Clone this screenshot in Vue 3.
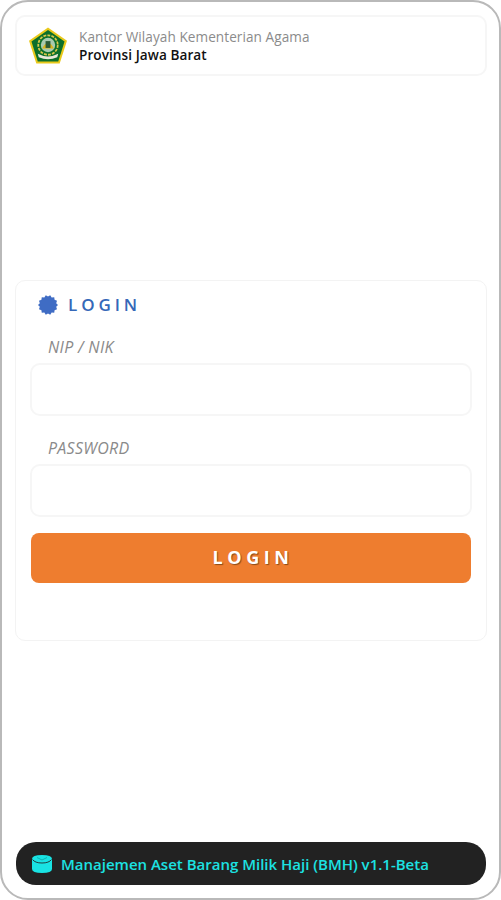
<template>
  <div class="frame">
    <header class="top-card">
      <svg class="logo" viewBox="0 0 40 38" aria-hidden="true">
        <polygon points="20,0.5 39.5,14 32,37.5 8,37.5 0.5,14" fill="#e9c91a" />
        <polygon points="20,3 37,15 30.5,35.5 9.5,35.5 3,15" fill="#0c6f2a" />
        <circle cx="20" cy="18.5" r="10" fill="none" stroke="#d9c84a" stroke-width="1.8" stroke-dasharray="3 1.2" />
        <circle cx="20" cy="18.5" r="7.4" fill="#a9cbae" />
        <path d="M14 22 Q20 11 26 22 Z" fill="#dcb41a" />
        <rect x="17.5" y="14.5" width="5" height="7" fill="#2b5b35" />
        <path d="M9.5 27.5 Q20 33 30.5 27.5 L29.5 31 Q20 35 10.5 31 Z" fill="#e8e8d8" />
      </svg>
      <div class="office">
        <span class="office-top">Kantor Wilayah Kementerian Agama</span>
        <span class="office-name">Provinsi Jawa Barat</span>
      </div>
    </header>

    <main class="login-card">
      <h2 class="login-title">
        <svg class="badge" viewBox="0 0 20 20" aria-hidden="true">
          <path :d="badgePath" fill="#3f6cc4" />
        </svg>
        <span>LOGIN</span>
      </h2>

      <label class="field-label" for="nip">NIP / NIK</label>
      <input id="nip" class="field" type="text" />

      <label class="field-label second" for="password">PASSWORD</label>
      <input id="password" class="field" type="password" />

      <button class="login-btn" type="button">LOGIN</button>
    </main>

    <footer class="app-bar">
      <svg class="db-icon" viewBox="0 0 22 20" aria-hidden="true">
        <path d="M1 5 Q1 1 11 1 Q21 1 21 5 V15 Q21 19 11 19 Q1 19 1 15 Z" fill="#19e3e3" />
        <path d="M1.5 5.5 Q4 9 11 9 Q18 9 20.5 5.5" fill="none" stroke="#1f2f30" stroke-width="0.9" />
        <path d="M6 3.5 L11 6 L16 3.5" fill="none" stroke="#0f9c9c" stroke-width="0.7" />
      </svg>
      <span class="app-name">Manajemen Aset Barang Milik Haji (BMH) v1.1-Beta</span>
    </footer>
  </div>
</template>

<script setup>
// gear-like round badge in front of the login title
const teeth = 14
let d = ''
for (let i = 0; i < teeth * 2; i++) {
  const r = i % 2 ? 8.4 : 10
  const a = (Math.PI * i) / teeth
  d += (i ? 'L' : 'M') + (10 + r * Math.cos(a)).toFixed(2) + ' ' + (10 + r * Math.sin(a)).toFixed(2)
}
const badgePath = d + 'Z'
</script>

<style>
html, body {
  margin: 0;
  background: #fff;
}
</style>

<style scoped>
.frame {
  box-sizing: border-box;
  width: 501px;
  height: 900px;
  padding: 13px 12px 13px 13px;
  display: flex;
  flex-direction: column;
  border: 2px solid #b9b9b9;
  border-radius: 28px;
  background: #fff;
  font-family: "Open Sans", sans-serif;
}

.top-card {
  box-sizing: border-box;
  height: 61px;
  flex-shrink: 0;
  display: flex;
  align-items: center;
  gap: 11px;
  padding: 0 11px;
  border: 2px solid #f6f6f6;
  border-radius: 10px;
}
.logo {
  width: 40px;
  height: 37px;
  flex-shrink: 0;
  filter: blur(0.4px);
}
.office {
  display: flex;
  flex-direction: column;
  line-height: 18px;
  font-size: 13.6px;
  letter-spacing: 0.06px;
}
.office-top {
  color: #8b8b8b;
}
.office-name {
  color: #111;
  font-weight: 600;
}

.login-card {
  box-sizing: border-box;
  height: 361px;
  margin: 204px 0 auto;
  padding: 12px 14px 0;
  border: 1px solid #f3f3f3;
  border-radius: 10px;
  display: flex;
  flex-direction: column;
}
.login-title {
  display: flex;
  align-items: center;
  gap: 10px;
  margin: 0 0 0 8px;
  color: #3568b8;
  font-size: 17px;
  font-weight: 600;
  letter-spacing: 3.9px;
  line-height: 24px;
}
.badge {
  width: 20px;
  height: 20px;
}
.field-label {
  margin: 19px 0 5px 18px;
  color: #8a8a8a;
  font-size: 16px;
  font-style: italic;
  letter-spacing: 0.3px;
  line-height: 22px;
}
.field-label.second {
  margin-top: 21px;
}
.field {
  box-sizing: border-box;
  width: 100%;
  height: 53px;
  border: 2px solid #f6f6f6;
  border-radius: 10px;
  background: #fff;
  outline: none;
}
.login-btn {
  box-sizing: border-box;
  width: 440px;
  height: 50px;
  margin: 16px 0 0 1px;
  padding: 0 0 2px 4px;
  border: none;
  border-radius: 8px;
  background: #ee7d2f;
  color: #fff;
  font-family: inherit;
  font-size: 18px;
  font-weight: 700;
  letter-spacing: 4.6px;
  text-shadow: 1px 1px 1px #8a4a18;
  cursor: pointer;
}

.app-bar {
  box-sizing: border-box;
  height: 43px;
  flex-shrink: 0;
  margin: 0 1px;
  display: flex;
  align-items: center;
  gap: 8px;
  padding: 0 15px;
  background: #222;
  border-radius: 20px;
}
.db-icon {
  width: 22px;
  height: 20px;
  flex-shrink: 0;
}
.app-name {
  color: #1ce2e2;
  font-size: 15px;
  font-weight: 600;
  white-space: nowrap;
}
</style>
